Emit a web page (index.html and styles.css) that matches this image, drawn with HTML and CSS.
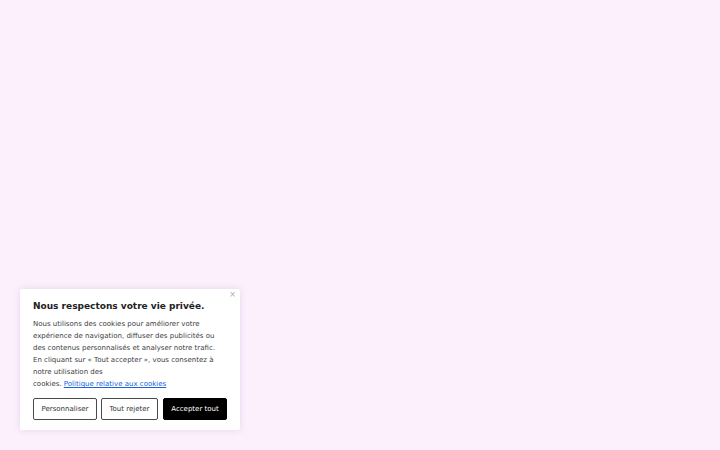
FILE: index.html
```html
<!DOCTYPE html>
<html lang="fr">
<head>
<meta charset="utf-8">
<link rel="stylesheet" href="styles.css">
</head>
<body>
<div class="banner">
  <button class="close" aria-label="Fermer">×</button>
  <h2 class="title">Nous respectons votre vie privée.</h2>
  <p class="text">Nous utilisons des cookies pour améliorer votre expérience de navigation, diffuser des publicités ou des contenus personnalisés et analyser notre trafic. En cliquant sur « Tout accepter », vous consentez à notre utilisation des<br>cookies. <a href="#" class="link">Politique relative aux cookies</a></p>
  <div class="actions">
    <button class="btn">Personnaliser</button>
    <button class="btn">Tout rejeter</button>
    <button class="btn primary">Accepter tout</button>
  </div>
</div>
</body>
</html>
```

FILE: styles.css
```css
html, body {
  margin: 0;
  padding: 0;
  height: 100%;
}
body {
  background: #fcf0fd;
  font-family: "DejaVu Sans", sans-serif;
  display: flex;
  flex-direction: column;
  justify-content: flex-end;
  padding: 0 0 20px 20px;
  box-sizing: border-box;
}
.banner {
  position: relative;
  width: 220px;
  box-sizing: border-box;
  background: #fff;
  padding: 11px 14px 10px 13px;
  box-shadow: 0 0 6px rgba(160, 130, 170, 0.25);
  border-radius: 2px;
}
.close {
  position: absolute;
  top: 1px;
  right: 4px;
  border: none;
  background: none;
  padding: 0;
  font-size: 8px;
  color: #aaa;
  line-height: 10px;
  font-family: "DejaVu Sans", sans-serif;
}
.title {
  margin: 0 0 6px;
  font-size: 9px;
  font-weight: bold;
  color: #212121;
  line-height: 12px;
}
.text {
  margin: 0 0 8px;
  font-size: 7px;
  line-height: 12px;
  color: #3d3d3d;
}
.link {
  color: #1863dc;
}
.actions {
  display: flex;
  gap: 4px;
}
.btn {
  font-family: "DejaVu Sans", sans-serif;
  font-size: 7px;
  height: 22px;
  width: 64px;
  padding: 0;
  background: #fff;
  color: #333;
  border: 1.5px solid #4a4a4a;
  border-radius: 2px;
  flex: none;
}
.btn:nth-child(2) {
  width: 57px;
}
.btn.primary {
  background: #000;
  color: #fff;
  border-color: #000;
  margin-left: 1px;
}
```
